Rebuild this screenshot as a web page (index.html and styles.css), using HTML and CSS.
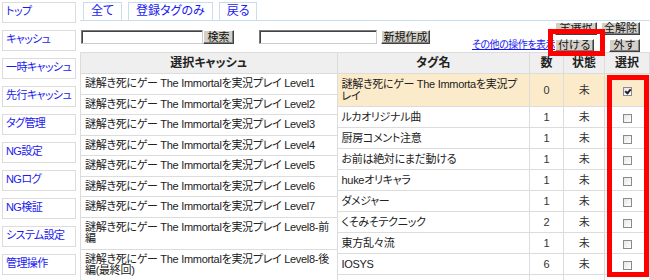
FILE: index.html
```html
<!DOCTYPE html>
<html lang="ja">
<head>
    <meta charset="UTF-8">
    <title>タグ管理</title>
    <link rel="stylesheet" href="styles.css">
</head>
<body>
    <div class="page">
        <div class="side">
            <a class="side-item">トップ</a>
            <a class="side-item">キャッシュ</a>
            <a class="side-item">一時キャッシュ</a>
            <a class="side-item">先行キャッシュ</a>
            <a class="side-item">タグ管理</a>
            <a class="side-item">NG設定</a>
            <a class="side-item">NGログ</a>
            <a class="side-item">NG検証</a>
            <a class="side-item">システム設定</a>
            <a class="side-item">管理操作</a>
        </div>

        <div class="main">
            <div class="tabs">
                <a class="tab">全て</a>
                <a class="tab">登録タグのみ</a>
                <a class="tab">戻る</a>
            </div>

            <div class="toolbar">
                <input type="text" class="text-in search-in">
                <button class="btn search-btn">検索</button>
                <input type="text" class="text-in new-in">
                <button class="btn new-btn">新規作成</button>
                <a class="more">その他の操作を表示</a>
                <div class="ops">
                    <div class="ops-row">
                        <button class="btn cut w-all"><span>全選択</span></button>
                        <button class="btn w-clear">全解除</button>
                    </div>
                    <div class="ops-row">
                        <button class="btn w-attach">付ける</button>
                        <button class="btn w-detach">外す</button>
                    </div>
                </div>
            </div>

            <div class="tables">
                <table class="grid cache">
                    <tr><th>選択キャッシュ</th></tr>
                    <tr><td>謎解き死にゲー The Immortalを実況プレイ Level1</td></tr>
                    <tr><td>謎解き死にゲー The Immortalを実況プレイ Level2</td></tr>
                    <tr><td>謎解き死にゲー The Immortalを実況プレイ Level3</td></tr>
                    <tr><td>謎解き死にゲー The Immortalを実況プレイ Level4</td></tr>
                    <tr><td>謎解き死にゲー The Immortalを実況プレイ Level5</td></tr>
                    <tr><td>謎解き死にゲー The Immortalを実況プレイ Level6</td></tr>
                    <tr><td>謎解き死にゲー The Immortalを実況プレイ Level7</td></tr>
                    <tr><td>謎解き死にゲー The Immortalを実況プレイ Level8-前<br>編</td></tr>
                    <tr><td>謎解き死にゲー The Immortalを実況プレイ Level8-後<br>編(最終回)</td></tr>
                </table>

                <table class="grid tags">
                    <colgroup><col class="c-name"><col class="c-num"><col class="c-state"><col class="c-pick"></colgroup>
                    <tr><th>タグ名</th><th>数</th><th>状態</th><th>選択</th></tr>
                    <tr class="hit"><td>謎解き死にゲー The Immortaを実況プ<br>レイ</td><td class="num">0</td><td class="state">未</td><td class="pick"><span class="check on"></span></td></tr>
                    <tr><td>ルカオリジナル曲</td><td class="num">1</td><td class="state">未</td><td class="pick"><span class="check"></span></td></tr>
                    <tr><td>厨房コメント注意</td><td class="num">1</td><td class="state">未</td><td class="pick"><span class="check"></span></td></tr>
                    <tr><td>お前は絶対にまだ動ける</td><td class="num">1</td><td class="state">未</td><td class="pick"><span class="check"></span></td></tr>
                    <tr><td>hukeオリキャラ</td><td class="num">1</td><td class="state">未</td><td class="pick"><span class="check"></span></td></tr>
                    <tr><td>ダメジャー</td><td class="num">1</td><td class="state">未</td><td class="pick"><span class="check"></span></td></tr>
                    <tr><td>くそみそテクニック</td><td class="num">2</td><td class="state">未</td><td class="pick"><span class="check"></span></td></tr>
                    <tr><td>東方乱々流</td><td class="num">1</td><td class="state">未</td><td class="pick"><span class="check"></span></td></tr>
                    <tr><td>IOSYS</td><td class="num">6</td><td class="state">未</td><td class="pick"><span class="check"></span></td></tr>
                    <tr><td>&nbsp;</td><td class="num"></td><td class="state"></td><td class="pick"></td></tr>
                </table>
            </div>
        </div>

        <!-- red highlight marks drawn over the screen -->
        <span class="mark mark-attach"></span>
        <span class="mark mark-col"></span>
    </div>
</body>
</html>
```

FILE: styles.css
```css
body {
    margin: 0;
    font-family: "Liberation Sans", "Noto Sans CJK JP", sans-serif;
    font-size: 11px;
    font-feature-settings: "palt";
    color: #222;
    background: #fff;
    overflow: hidden;
}
.page {
    position: relative;
    display: flex;
    width: 650px;
    height: 280px;
    overflow: hidden;
}
.side {
    display: flex;
    flex-direction: column;
    gap: 7px;
    width: 74px;
    padding: 2px 0 0 2px;
    flex: none;
}
.side-item {
    display: block;
    height: 19px;
    line-height: 16px;
    padding-left: 3px;
    border: 1px solid #dcdcdc;
    color: #1a1aee;
    font-size: 11px;
    letter-spacing: -0.6px;
    white-space: nowrap;
    overflow: hidden;
}
.main {
    width: 570px;
    margin-left: 4px;
    display: flex;
    flex-direction: column;
}
.tabs {
    display: flex;
    gap: 6px;
    height: 18px;
    padding: 2px 0 0 3px;
    border-bottom: 1px solid #c6def0;
}
.tab {
    display: block;
    padding: 0 7px;
    line-height: 17px;
    border: 1px solid #c6def0;
    border-bottom: none;
    color: #1a1aee;
    font-size: 12px;
}
.toolbar {
    display: flex;
    align-items: flex-start;
    height: 34px;
}
.text-in {
    box-sizing: border-box;
    height: 14px;
    margin-top: 9px;
    padding: 0;
    border: 1px solid #7a7a7a;
    border-right-color: #ccc;
    border-bottom-color: #ccc;
    box-shadow: inset 1px 1px 0 #444;
}
.search-in {
    width: 122px;
    margin-left: 1px;
}
.new-in {
    width: 118px;
    margin-left: 25px;
}
.btn {
    box-sizing: border-box;
    height: 14px;
    padding: 0;
    margin-top: 9px;
    background: #d4d0c8;
    border: 1px solid;
    border-color: #fff #404040 #404040 #fff;
    box-shadow: inset -1px -1px 0 #808080;
    font-family: "Liberation Sans", "Noto Sans CJK JP", sans-serif;
    font-size: 11px;
    line-height: 11px;
    color: #111;
    white-space: nowrap;
}
.search-btn {
    width: 32px;
}
.new-btn {
    margin-left: 4px;
    width: 50px;
}
.more {
    margin: 18px 0 0 42px;
    color: #1a1aee;
    text-decoration: underline;
    font-size: 10px;
    letter-spacing: -0.5px;
    line-height: 12px;
    white-space: nowrap;
}
.ops {
    margin-left: auto;
    margin-right: 10px;
    display: flex;
    flex-direction: column;
}
.ops .btn {
    margin-top: 0;
    height: 13px;
}
.ops-row {
    display: flex;
}
.ops-row + .ops-row {
    margin-top: 4px;
}
.w-all { width: 42px; overflow: hidden; }
.w-clear { width: 39px; margin-left: 4px; }
.ops-row:first-child .btn { margin-top: 1px; }
.w-attach { width: 39px; }
.w-detach { width: 31px; margin-left: 15px; }
.cut span {
    display: block;
    margin-top: -5px;
}
.tables {
    display: flex;
    align-items: flex-start;
}
.grid {
    border-collapse: collapse;
    table-layout: fixed;
}
.grid th {
    height: 12px;
    padding: 4px 2px;
    background: #efefef;
    border: 1px solid #dcdcdc;
    font-weight: bold;
    font-size: 12px;
    line-height: 12px;
    white-space: nowrap;
    overflow: hidden;
}
.grid td {
    padding: 4px 4px;
    border: 1px solid #dcdcdc;
    line-height: 12px;
    letter-spacing: -0.3px;
    white-space: nowrap;
    overflow: hidden;
    vertical-align: middle;
}
.cache {
    width: 258px;
}
.cache td {
    line-height: 11.5px;
}
.tags {
    width: 312px;
}
.tags th:first-child,
.tags td:first-child {
    border-left: none;
}
.c-name { width: 192px; }
.c-num { width: 34px; }
.c-state { width: 41px; }
.c-pick { width: 45px; }
.hit td {
    background: #fcebca;
}
.num,
.state,
.pick {
    text-align: center;
    color: #333;
}
.check {
    display: inline-block;
    box-sizing: border-box;
    width: 9px;
    height: 9px;
    border: 1px solid #8a8a8a;
    background: linear-gradient(135deg, #e6e6e6, #fff);
    vertical-align: middle;
    position: relative;
}
.check.on::after {
    content: "";
    position: absolute;
    left: 2px;
    top: 0;
    width: 2px;
    height: 4px;
    border: solid #222;
    border-width: 0 2px 2px 0;
    transform: rotate(40deg);
}
.mark {
    position: absolute;
    box-sizing: border-box;
    border: 5px solid #f00;
}
.mark-attach {
    left: 548px;
    top: 29px;
    width: 57px;
    height: 27px;
}
.mark-col {
    left: 607px;
    top: 75px;
    width: 42px;
    height: 202px;
}
```
